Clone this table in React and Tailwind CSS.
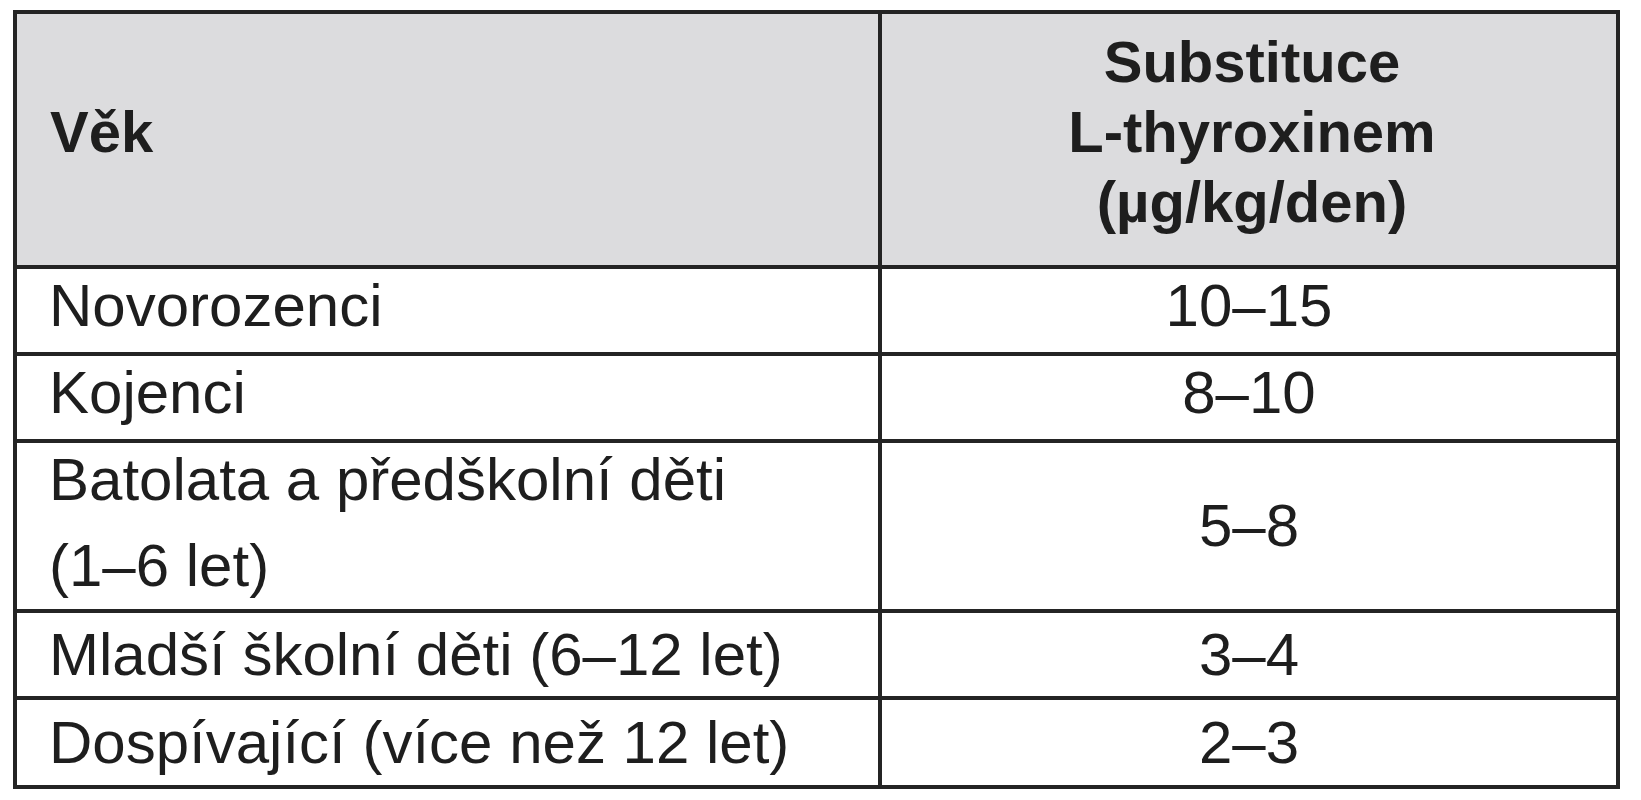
import React from "react";

const rows = [
  { age: ["Novorozenci"], dose: "10–15", h: "h-[87px]", pad: "pb-[9px]" },
  { age: ["Kojenci"], dose: "8–10", h: "h-[87px]", pad: "pb-[9px]" },
  { age: ["Batolata a předškolní děti", "(1–6 let)"], dose: "5–8", h: "h-[170px]", pad: "pb-[6px]", tall: true },
  { age: ["Mladší školní děti (6–12 let)"], dose: "3–4", h: "h-[87px]", pad: "" },
  { age: ["Dospívající (více než 12 let)"], dose: "2–3", h: "h-[89px]", pad: "" },
];

const App = () => {
  return (
    <div className="w-[1641px] h-[800px] bg-white pt-[10px] pl-[13px]" style={{ fontFamily: '"Liberation Sans", Arial, sans-serif' }}>
      <div className="w-[1607px] border-[4px] border-[#242424] text-[#1e1e1e]">
        <div className="flex h-[251px] bg-[#dcdcde] text-[58px] font-bold leading-[70px]">
          <div className="w-[865px] border-r-[4px] border-[#242424] flex items-center pl-[33px] pb-[15px]">
            Věk
          </div>
          <div className="flex-1 flex flex-col items-center justify-center text-center pb-[15px] pl-[6px]">
            <span>Substituce</span>
            <span>L-thyroxinem</span>
            <span>(µg/kg/den)</span>
          </div>
        </div>
        {rows.map((r, i) => (
          <div key={i} className={`flex ${r.h} border-t-[4px] border-[#242424] text-[60px]`}>
            <div className={`w-[865px] border-r-[4px] border-[#242424] flex flex-col justify-center pl-[32px] ${r.pad} ${r.tall ? "leading-[86px]" : "leading-[70px]"}`}>
              {r.age.map((t, j) => (
                <span key={j}>{t}</span>
              ))}
            </div>
            <div className={`flex-1 flex items-center justify-center leading-[70px] ${r.tall ? "" : r.pad}`}>
              {r.dose}
            </div>
          </div>
        ))}
      </div>
    </div>
  );
};

export default App;
